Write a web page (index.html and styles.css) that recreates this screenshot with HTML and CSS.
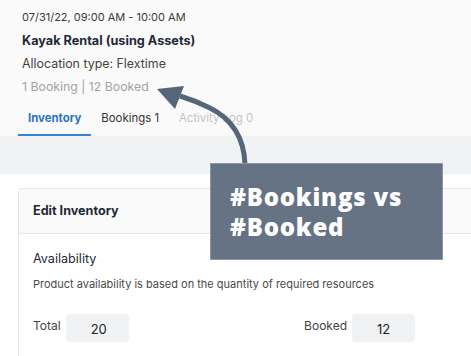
FILE: index.html
```html
<!DOCTYPE html>
<html lang="en">
<head>
    <meta charset="UTF-8">
    <title>Kayak Rental</title>
    <link rel="stylesheet" href="styles.css">
</head>
<body>

<div class="summary">
    <div class="date">07/31/22, 09:00 AM - 10:00 AM</div>
    <div class="title">Kayak Rental (using Assets)</div>
    <div class="allocation">Allocation type: Flextime</div>
    <div class="counts">1 Booking | 12 Booked</div>
    <div class="tabs">
        <div class="tab active">Inventory</div>
        <div class="tab">Bookings 1</div>
        <div class="tab muted">Activity Log 0</div>
    </div>
</div>

<div class="band"></div>

<div class="content">
    <div class="card">
        <div class="card-header">Edit Inventory</div>
        <div class="card-body">
            <div class="section-title">Availability</div>
            <div class="section-text">Product availability is based on the quantity of required resources</div>
            <div class="fields">
                <div class="field">
                    <span class="label">Total</span>
                    <span class="value">20</span>
                </div>
                <div class="field">
                    <span class="label">Booked</span>
                    <span class="value">12</span>
                </div>
            </div>
        </div>
    </div>
</div>

<!-- annotation -->
<svg class="arrow" width="471" height="356" viewBox="0 0 471 356">
    <path d="M245 164 C244 140 234 120 210 108 C198 102 190 99 180 96" fill="none" stroke="#56667a" stroke-width="5"/>
    <polygon points="157,89 184,86 175,109" fill="#56667a"/>
</svg>
<div class="note">#Bookings vs<br>#Booked</div>

</body>
</html>
```

FILE: styles.css
```css
body {
    margin: 0;
    font-family: 'Inter', 'Liberation Sans', sans-serif;
    color: #333;
    background-color: #fff;
    height: 356px;
    overflow: hidden;
    position: relative;
}

.summary {
    background-color: #fafafa;
    padding: 9px 0 0 22px;
}

.date {
    font-size: 11px;
    line-height: 16px;
    color: #3a3a3a;
}

.title {
    font-size: 12.7px;
    font-weight: 700;
    line-height: 16px;
    margin-top: 8px;
    color: #1f2a37;
}

.allocation {
    font-size: 12.4px;
    line-height: 16px;
    margin-top: 7px;
    color: #444;
}

.counts {
    font-size: 12.3px;
    line-height: 16px;
    margin-top: 7px;
    color: #a3a3a3;
}

.tabs {
    display: flex;
    margin-top: 12px;
    margin-left: -4px;
}

.tab {
    font-size: 11.4px;
    line-height: 16px;
    padding: 3px 10px 8px;
    color: #333;
}

.tab.active {
    font-weight: 700;
    color: #2a74c3;
    border-bottom: 2px solid #3585d6;
}

.tab.muted {
    color: #c4c4c4;
}

.band {
    height: 38px;
    background-color: #f1f2f4;
}

.content {
    padding: 14px 0 0 18px;
}

.card {
    border: 1px solid #e4e6ea;
    border-right: none;
    border-radius: 5px 0 0 0;
    background-color: #fff;
}

.card-header {
    height: 44px;
    line-height: 44px;
    padding-left: 14px;
    font-size: 12.6px;
    font-weight: 700;
    color: #1f2a37;
    background-color: #fafafa;
    border-bottom: 1px solid #e4e6ea;
    border-radius: 5px 0 0 0;
}

.card-body {
    padding: 16px 14px 20px;
}

.section-title {
    font-size: 12.6px;
    line-height: 18px;
    color: #1f2a37;
}

.section-text {
    font-size: 11px;
    line-height: 14px;
    margin-top: 9px;
    color: #4a4a4a;
}

.fields {
    display: flex;
    margin-top: 23px;
    width: 382px;
    justify-content: space-between;
}

.field {
    display: flex;
    align-items: center;
}

.label {
    font-size: 12px;
    color: #444;
    margin-right: 5px;
    margin-top: -5px;
}

.value {
    width: 63px;
    height: 28px;
    line-height: 30px;
    box-sizing: border-box;
    padding-left: 25px;
    background-color: #f1f2f4;
    border-radius: 4px;
    font-size: 13px;
    color: #222;
}

.arrow {
    position: absolute;
    top: 0;
    left: 0;
}

.note {
    position: absolute;
    left: 210px;
    top: 163px;
    width: 233px;
    height: 97px;
    box-sizing: border-box;
    padding: 18px 0 0 19px;
    background-color: rgba(80, 96, 116, 0.88);
    border: 1px solid #8a97a6;
    color: #fff;
    font-family: 'Open Sans', sans-serif;
    font-weight: 800;
    font-size: 24px;
    letter-spacing: 0.8px;
    line-height: 30px;
}
```
